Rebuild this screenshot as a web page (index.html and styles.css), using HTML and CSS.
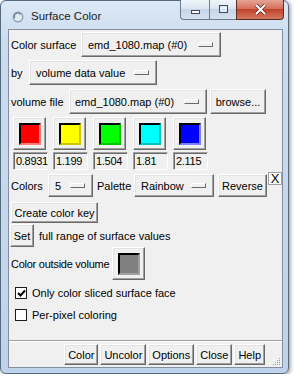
FILE: index.html
```html
<!DOCTYPE html>
<html lang="en">
<head>
    <meta charset="UTF-8">
    <title>Surface Color</title>
    <link rel="stylesheet" href="styles.css">
</head>
<body>
    <div class="window">
        <div class="titlebar">
            <svg class="app-icon" width="12" height="12" viewBox="0 0 12 12">
                <circle cx="6" cy="6" r="5.5" fill="#8fa3b8"/>
                <circle cx="6" cy="6" r="4" fill="#e3eaf2"/>
                <path d="M3 7 A3.2 3.2 0 0 1 8.5 3.6" stroke="#6d8299" stroke-width="1.2" fill="none"/>
            </svg>
            <span class="title">Surface Color</span>
            <div class="caption">
                <span class="cap cap-min">
                    <svg width="11" height="11" viewBox="0 0 11 11"><rect x="1.5" y="6.5" width="8" height="3" fill="#fff" stroke="#3b4a5c"/></svg>
                </span>
                <span class="cap cap-max">
                    <svg width="11" height="11" viewBox="0 0 11 11"><rect x="1.5" y="1.5" width="8" height="7" fill="none" stroke="#3b4a5c"/><rect x="3" y="4" width="5" height="3" fill="none" stroke="#fff"/></svg>
                </span>
                <span class="cap cap-close">
                    <svg width="13" height="11" viewBox="0 0 13 11"><path d="M2 1 L11 10 M11 1 L2 10" stroke="#5b2a22" stroke-width="3.4"/><path d="M2 1 L11 10 M11 1 L2 10" stroke="#fff" stroke-width="2"/></svg>
                </span>
            </div>
        </div>

        <div class="client">
            <div class="row row-surface">
                <span class="lbl lbl-surface">Color surface</span>
                <span class="menubtn mb-surface">emd_1080.map (#0)<i class="ind"></i></span>
            </div>
            <div class="row row-by">
                <span class="lbl lbl-by">by</span>
                <span class="menubtn mb-by">volume data value<i class="ind"></i></span>
            </div>
            <div class="row row-volume">
                <span class="lbl lbl-volume">volume file</span>
                <span class="menubtn mb-volume">emd_1080.map (#0)<i class="ind"></i></span>
                <span class="btn btn-browse">browse...</span>
            </div>

            <div class="swatches">
                <div class="swatch-col">
                    <span class="btn swatch"><i class="chip" style="background:#ff0000;border-right-color:#ff8080;border-bottom-color:#ff8080"></i></span>
                    <span class="entry">0.8931</span>
                </div>
                <div class="swatch-col">
                    <span class="btn swatch"><i class="chip" style="background:#ffff00;border-right-color:#c8c800;border-bottom-color:#c8c800"></i></span>
                    <span class="entry">1.199</span>
                </div>
                <div class="swatch-col">
                    <span class="btn swatch"><i class="chip" style="background:#00ff00;border-right-color:#00c000;border-bottom-color:#00c000"></i></span>
                    <span class="entry">1.504</span>
                </div>
                <div class="swatch-col">
                    <span class="btn swatch"><i class="chip" style="background:#00ffff;border-right-color:#00c0c0;border-bottom-color:#00c0c0"></i></span>
                    <span class="entry">1.81</span>
                </div>
                <div class="swatch-col">
                    <span class="btn swatch"><i class="chip" style="background:#0000ff;border-right-color:#8080ff;border-bottom-color:#8080ff"></i></span>
                    <span class="entry">2.115</span>
                </div>
            </div>

            <div class="row row-palette">
                <span class="lbl lbl-colors">Colors</span>
                <span class="menubtn mb-count">5<i class="ind"></i></span>
                <span class="lbl lbl-palette">Palette</span>
                <span class="menubtn mb-palette">Rainbow<i class="ind"></i></span>
                <span class="btn btn-reverse">Reverse</span>
                <span class="close-x">X</span>
            </div>

            <div class="row row-key">
                <span class="btn btn-key">Create color key</span>
            </div>

            <div class="row row-range">
                <span class="btn btn-set">Set</span>
                <span class="lbl lbl-range">full range of surface values</span>
            </div>

            <div class="row row-outside">
                <span class="lbl lbl-outside">Color outside volume</span>
                <span class="btn swatch"><i class="chip chip-gray"></i></span>
            </div>

            <label class="check check-sliced">
                <span class="box checked">
                    <svg width="9" height="9" viewBox="0 0 9 9"><path d="M1 4 L3.5 6.5 L8 1.5" stroke="#000" stroke-width="2" fill="none"/></svg>
                </span>
                Only color sliced surface face
            </label>
            <label class="check check-pixel">
                <span class="box"></span>
                Per-pixel coloring
            </label>

            <div class="separator"></div>
            <div class="buttonbar">
                <span class="btn bb">Color</span>
                <span class="btn bb">Uncolor</span>
                <span class="btn bb">Options</span>
                <span class="btn bb">Close</span>
                <span class="btn bb">Help</span>
                <svg class="grip" width="9" height="8" viewBox="0 0 9 8">
                    <rect x="7" y="1" width="1" height="1" fill="#a0a0a0"/>
                    <rect x="5" y="3" width="1" height="1" fill="#a0a0a0"/>
                    <rect x="7" y="3" width="1" height="1" fill="#a0a0a0"/>
                    <rect x="3" y="5" width="1" height="1" fill="#a0a0a0"/>
                    <rect x="5" y="5" width="1" height="1" fill="#a0a0a0"/>
                    <rect x="7" y="5" width="1" height="1" fill="#a0a0a0"/>
                    <rect x="1" y="7" width="1" height="1" fill="#a0a0a0"/>
                    <rect x="3" y="7" width="1" height="1" fill="#a0a0a0"/>
                    <rect x="5" y="7" width="1" height="1" fill="#a0a0a0"/>
                    <rect x="7" y="7" width="1" height="1" fill="#a0a0a0"/>
                </svg>
            </div>
        </div>
    </div>
</body>
</html>
```

FILE: styles.css
```css
* {
    box-sizing: border-box;
}
body {
    margin: 0;
    background: #fff;
    font-family: "Liberation Sans", Arial, sans-serif;
    font-size: 11px;
    color: #000;
}
.window {
    width: 289px;
    height: 374px;
    border: 1px solid #55697f;
    border-radius: 6px;
    background: linear-gradient(to bottom, #dce8f5 0, #cbdcef 40px, #bed3eb 100%);
    box-shadow: 1px 1px 4px rgba(0, 0, 0, 0.45);
    display: flex;
    flex-direction: column;
}
.titlebar {
    height: 28px;
    display: flex;
    align-items: flex-start;
}
.app-icon {
    margin: 10px 0 0 11px;
}
.title {
    margin: 8px 0 0 7px;
    font-size: 11.5px;
    line-height: 14px;
    color: #1b1b1b;
}
.caption {
    margin: -1px 4px 0 auto;
    display: flex;
}
.cap {
    height: 20px;
    display: flex;
    align-items: center;
    justify-content: center;
    border: 1px solid #6b7c91;
    border-top: none;
    background: linear-gradient(to bottom, #f1f5fa 0, #dbe5f1 45%, #c6d5e7 50%, #d5e1ee 100%);
}
.cap-min {
    width: 29px;
    border-radius: 0 0 0 4px;
    border-right: none;
}
.cap-max {
    width: 27px;
    border-right: none;
}
.cap-close {
    width: 48px;
    border-radius: 0 0 4px 0;
    border-color: #5e2a23;
    background: linear-gradient(to bottom, #e6a394 0, #d6705c 45%, #c2422d 50%, #d47a5f 100%);
}
.client {
    flex: 1;
    margin: 0 5px 5px 7px;
    border: 1px solid #838fa0;
    background: #f0f0f0;
    display: flex;
    flex-direction: column;
}
.row {
    display: flex;
    align-items: center;
    padding-left: 2px;
}
.lbl {
    white-space: nowrap;
}
.btn, .menubtn {
    display: flex;
    align-items: center;
    background: #f0f0f0;
    border: 1px solid;
    border-color: #fff #696969 #696969 #fff;
    box-shadow: inset -1px -1px #a0a0a0, inset 1px 1px #e3e3e3;
    white-space: nowrap;
}
.btn {
    justify-content: center;
}
.menubtn {
    padding-left: 6px;
}
.ind {
    margin-left: auto;
    margin-right: 7px;
    width: 15px;
    height: 5px;
    border: 1px solid;
    border-color: #fff #696969 #696969 #fff;
    background: #f0f0f0;
}
.row-surface {
    margin-top: 2px;
    height: 25px;
}
.lbl-surface {
    width: 70px;
}
.mb-surface {
    width: 140px;
    height: 25px;
}
.row-by {
    margin-top: 3px;
    height: 25px;
}
.lbl-by {
    width: 18px;
}
.mb-by {
    width: 128px;
    height: 25px;
}
.row-volume {
    margin-top: 4px;
    height: 25px;
}
.lbl-volume {
    width: 58px;
}
.mb-volume {
    width: 138px;
    height: 25px;
    padding-left: 5px;
}
.btn-browse {
    margin-left: 3px;
    width: 56px;
    height: 25px;
}
.swatches {
    display: flex;
    gap: 5px;
    margin-top: 3px;
    padding-left: 4px;
}
.swatch-col {
    width: 35px;
    display: flex;
    flex-direction: column;
}
.swatch {
    width: 33px;
    height: 33px;
}
.chip {
    width: 22px;
    height: 22px;
    border: 2px solid #000;
}
.chip-gray {
    background: #808080;
    border-right-color: #a0a0a0;
    border-bottom-color: #a0a0a0;
}
.entry {
    margin-top: 2px;
    width: 35px;
    height: 18px;
    padding: 0 0 0 2px;
    line-height: 16px;
    letter-spacing: -0.3px;
    white-space: nowrap;
    background: #f0f0f0;
    border: 1px solid;
    border-color: #a0a0a0 #fff #fff #a0a0a0;
    box-shadow: inset 1px 1px #696969;
}
.row-palette {
    margin-top: 4px;
    height: 23px;
}
.lbl-colors {
    width: 37px;
}
.mb-count {
    width: 45px;
    height: 23px;
}
.lbl-palette {
    margin-left: 4px;
    width: 37px;
}
.mb-palette {
    width: 80px;
    height: 23px;
}
.btn-reverse {
    margin-left: 4px;
    width: 49px;
    height: 23px;
}
.close-x {
    align-self: flex-start;
    margin: -2px 0 0 1px;
    width: 14px;
    height: 13px;
    border: 1px solid #a0a0a0;
    background: #fff;
    font-size: 13px;
    line-height: 11px;
    text-align: center;
}
.row-key {
    margin-top: 5px;
    height: 21px;
}
.btn-key {
    width: 87px;
    height: 21px;
}
.row-range {
    margin-top: 1px;
    height: 23px;
    padding-left: 1px;
}
.btn-set {
    width: 24px;
    height: 23px;
}
.lbl-range {
    margin-left: 5px;
}
.row-outside {
    height: 33px;
}
.lbl-outside {
    width: 101px;
    letter-spacing: -0.25px;
}
.check {
    display: flex;
    align-items: center;
    height: 16px;
    padding-left: 6px;
    white-space: nowrap;
}
.check-sliced {
    margin-top: 5px;
}
.check-pixel {
    margin-top: 6px;
}
.box {
    width: 12px;
    height: 12px;
    margin-right: 5px;
    display: flex;
    align-items: center;
    justify-content: center;
    background: #fff;
    border: 1px solid #1c1c1c;
}
.separator {
    margin-top: auto;
    height: 2px;
    border-top: 1px solid #a0a0a0;
    border-bottom: 1px solid #fff;
}
.buttonbar {
    display: flex;
    justify-content: flex-end;
    gap: 2px;
    margin: 2px 1px 2px 0;
    height: 21px;
}
.bb {
    height: 21px;
    padding: 0 3px;
}
.grip {
    align-self: flex-end;
    margin-left: 5px;
}
```
